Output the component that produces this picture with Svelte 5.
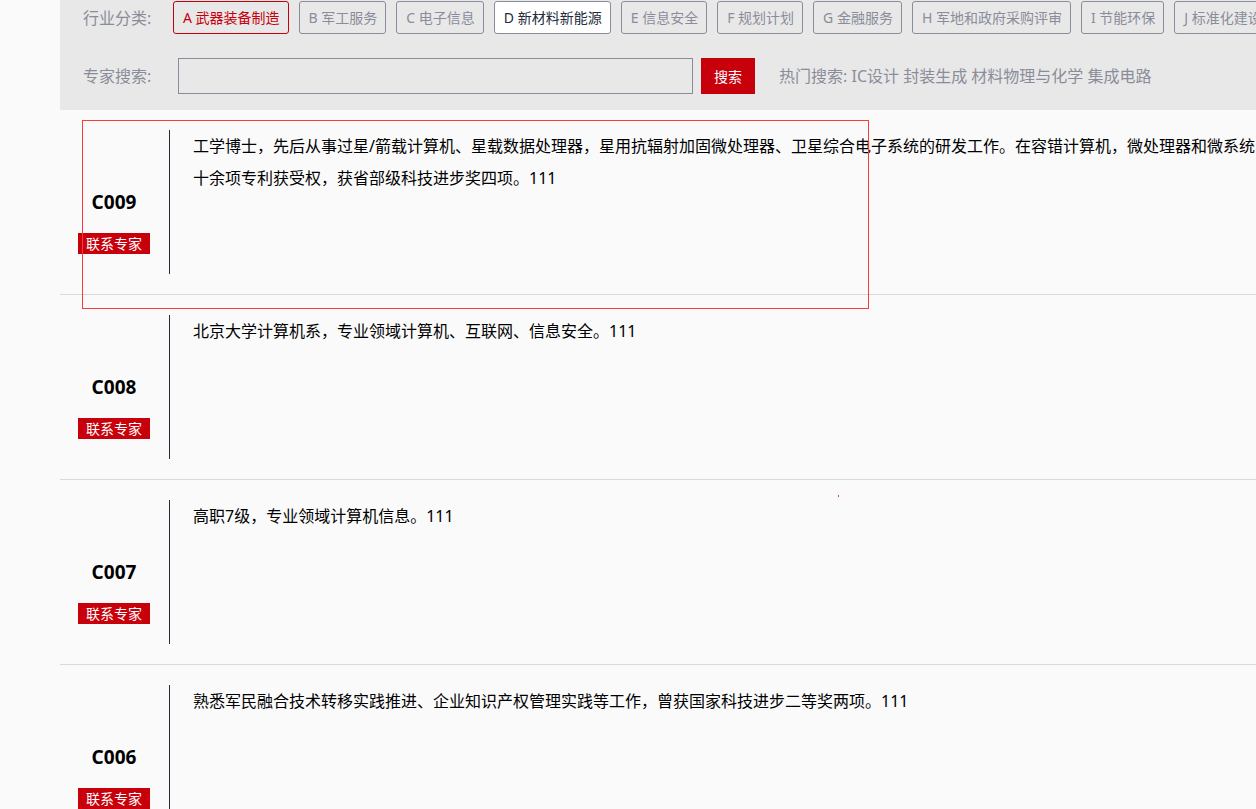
<script>
  let keyword = "";
  let selected = "A";
  let highlighted = "D";

  const industries = [
    { code: "A", name: "武器装备制造" },
    { code: "B", name: "军工服务" },
    { code: "C", name: "电子信息" },
    { code: "D", name: "新材料新能源" },
    { code: "E", name: "信息安全" },
    { code: "F", name: "规划计划" },
    { code: "G", name: "金融服务" },
    { code: "H", name: "军地和政府采购评审" },
    { code: "I", name: "节能环保" },
    { code: "J", name: "标准化建设" }
  ];

  const hotWords = ["IC设计", "封装生成", "材料物理与化学", "集成电路"];

  // every entry of intro is one line of text
  const experts = [
    {
      id: "C009",
      intro: [
        "工学博士，先后从事过星/箭载计算机、星载数据处理器，星用抗辐射加固微处理器、卫星综合电子系统的研发工作。在容错计算机，微处理器和微系统",
        "十余项专利获受权，获省部级科技进步奖四项。111"
      ]
    },
    { id: "C008", intro: ["北京大学计算机系，专业领域计算机、互联网、信息安全。111"] },
    { id: "C007", intro: ["高职7级，专业领域计算机信息。111"] },
    { id: "C006", intro: ["熟悉军民融合技术转移实践推进、企业知识产权管理实践等工作，曾获国家科技进步二等奖两项。111"] }
  ];
</script>

<div class="page">
  <form class="filter" on:submit|preventDefault>
    <div class="filterRow">
      <span class="label">行业分类:</span>
      <div class="tags">
        {#each industries as item}
          <button
            type="button"
            class="tag"
            class:selected={item.code === selected}
            class:highlighted={item.code === highlighted}
            on:click={() => selected = item.code}
          >{item.code} {item.name}</button>
        {/each}
      </div>
    </div>
    <div class="filterRow">
      <label class="label" for="keyword">专家搜索:</label>
      <input id="keyword" type="text" bind:value={keyword}>
      <button type="submit" class="search">搜索</button>
      <p class="hot">热门搜索: {#each hotWords as word}<a href="#keyword">{word}</a>{" "}{/each}</p>
    </div>
  </form>

  <ul class="experts">
    {#each experts as expert}
      <li>
        <div class="card">
          <h3>{expert.id}</h3>
          <button type="button" class="contact">联系专家</button>
        </div>
        <div class="intro">
          {#each expert.intro as line}
            <p>{line}</p>
          {/each}
        </div>
      </li>
    {/each}
  </ul>

  <div class="frame"></div>
  <div class="dot"></div>
</div>

<style>
  :global(body) {
    background: #fafafa;
  }

  .page {
    position: relative;
    box-sizing: border-box;
    height: 100vh;
    padding-left: 60px;
    overflow: hidden;
    font-family: "Noto Sans", "Noto Sans CJK SC", sans-serif;
    font-size: 16px;
    color: #000;
  }

  button, input {
    box-sizing: border-box;
    margin: 0;
    font-family: inherit;
    border-radius: 0;
  }

  button {
    cursor: pointer;
  }

  h3, p, ul {
    margin: 0;
    padding: 0;
  }

  .filter {
    display: flex;
    flex-direction: column;
    gap: 24px;
    padding: 1px 0 16px 23px;
    background: #e8e8e8;
    color: #8a8d99;
    white-space: nowrap;
  }

  .filterRow {
    display: flex;
    align-items: center;
  }

  .label {
    flex: none;
    width: 90px;
    line-height: 32px;
  }

  .tags {
    display: flex;
    gap: 10px;
  }

  .tag {
    flex: none;
    height: 33px;
    padding: 0 8px 0 9px;
    border: 1px solid #8a8d99;
    border-radius: 3px;
    background: none;
    color: #8a8d99;
    font-size: 14px;
    line-height: 31px;
    white-space: nowrap;
  }

  .tag.selected {
    border-color: #c7000b;
    color: #c7000b;
  }

  .tag.highlighted {
    background: #fff;
    color: #252b3a;
  }

  input {
    flex: none;
    width: 515px;
    height: 36px;
    margin-left: 5px;
    padding: 0 10px;
    border: 1px solid #8a8d99;
    background: none;
    font-size: 14px;
    outline: none;
  }

  .search {
    flex: none;
    height: 36px;
    margin: 0 24px 0 8px;
    padding: 0 13px;
    border: none;
    background: #c7000b;
    color: #fff;
    font-size: 14px;
  }

  .hot {
    line-height: 32px;
  }

  .hot a {
    color: inherit;
    text-decoration: none;
  }

  .experts {
    list-style: none;
  }

  li {
    display: flex;
    padding: 20px 0;
    border-bottom: 1px solid #d9d9d9;
  }

  .card {
    box-sizing: border-box;
    flex: none;
    display: flex;
    flex-direction: column;
    align-items: center;
    width: 110px;
    height: 144px;
    padding: 56px 1px 0 0;
    border-right: 1px solid #252b3a;
  }

  h3 {
    margin-bottom: 15px;
    font-size: 19px;
    line-height: 32px;
  }

  .contact {
    height: 21px;
    padding: 0 8px;
    border: none;
    background: #c7000b;
    color: #fff;
    font-size: 14px;
    line-height: 21px;
  }

  .intro {
    padding-left: 23px;
    line-height: 32px;
    white-space: nowrap;
  }

  .frame {
    position: absolute;
    top: 120px;
    left: 82px;
    width: 785px;
    height: 187px;
    border: 1px solid #ff3838;
    pointer-events: none;
  }

  .dot {
    position: absolute;
    top: 495px;
    left: 838px;
    width: 1px;
    height: 2px;
    background: #ff3838;
  }
</style>
